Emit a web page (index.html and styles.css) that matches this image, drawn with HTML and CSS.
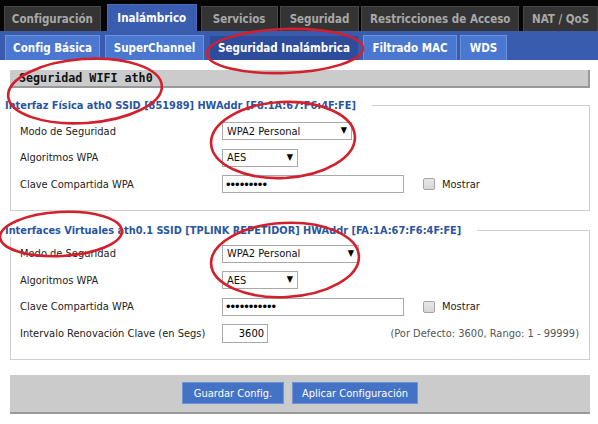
FILE: index.html
```html
<!DOCTYPE html>
<html lang="es">
<head>
    <meta charset="UTF-8">
    <title>Seguridad Inalámbrica</title>
    <link rel="stylesheet" href="styles.css">
</head>
<body>
    <div class="topbar">
        <a class="tab">Configuración</a>
        <a class="tab active">Inalámbrico</a>
        <a class="tab">Servicios</a>
        <a class="tab">Seguridad</a>
        <a class="tab">Restricciones de Acceso</a>
        <a class="tab">NAT / QoS</a>
    </div>
    <div class="subbar">
        <a class="subtab">Config Básica</a>
        <a class="subtab">SuperChannel</a>
        <a class="subtab active">Seguridad Inalámbrica</a>
        <a class="subtab">Filtrado MAC</a>
        <a class="subtab">WDS</a>
    </div>

    <div class="content">
        <h2 class="section">Seguridad WIFI ath0</h2>

        <fieldset class="group first">
            <legend>Interfaz Física ath0 SSID [851989] HWAddr [F8:1A:67:F6:4F:FE]</legend>
            <div class="row">
                <label>Modo de Seguridad</label>
                <span class="sel mode"><select><option>WPA2 Personal</option></select></span>
            </div>
            <div class="row">
                <label>Algoritmos WPA</label>
                <span class="sel algo"><select><option>AES</option></select></span>
            </div>
            <div class="row">
                <label>Clave Compartida WPA</label>
                <input class="key" type="password" value="123456789">
                <span class="check"></span><span class="show">Mostrar</span>
            </div>
        </fieldset>

        <fieldset class="group second">
            <legend>Interfaces Virtuales ath0.1 SSID [TPLINK REPETIDOR] HWAddr [FA:1A:67:F6:4F:FE]</legend>
            <div class="row">
                <label>Modo de Seguridad</label>
                <span class="sel mode wide"><select><option>WPA2 Personal</option></select></span>
            </div>
            <div class="row">
                <label>Algoritmos WPA</label>
                <span class="sel algo"><select><option>AES</option></select></span>
            </div>
            <div class="row">
                <label>Clave Compartida WPA</label>
                <input class="key" type="password" value="12345678901">
                <span class="check"></span><span class="show">Mostrar</span>
            </div>
            <div class="row">
                <label>Intervalo Renovación Clave (en Segs)</label>
                <input class="num" type="text" value="3600">
                <span class="hint">(Por Defecto: 3600, Rango: 1 - 99999)</span>
            </div>
        </fieldset>

        <div class="actions">
            <button class="save">Guardar Config.</button>
            <button class="apply">Aplicar Configuración</button>
        </div>
    </div>

    <svg class="marks" width="598" height="424" viewBox="0 0 598 424">
        <ellipse cx="285" cy="51" rx="78" ry="22" transform="rotate(-2 285 51)"/>
        <ellipse cx="85" cy="91" rx="77" ry="32" transform="rotate(-4 85 91)"/>
        <ellipse cx="283" cy="140" rx="72" ry="38" transform="rotate(-3 283 140)"/>
        <ellipse cx="61" cy="234" rx="61" ry="22" transform="rotate(-3 61 234)"/>
        <ellipse cx="285" cy="260" rx="74" ry="37" transform="rotate(-3 285 260)"/>
    </svg>
</body>
</html>
```

FILE: styles.css
```css
*{
    box-sizing: border-box;
}
body{
    margin: 0;
    background: #fff;
    font-family: "DejaVu Sans Condensed", "Liberation Sans", Arial, sans-serif;
    font-size: 11px;
    color: #222;
    position: relative;
}
.topbar{
    background: #050505;
    height: 31px;
    display: flex; align-items: flex-end;
    padding-left: 4px;
}
.tab{
    height: 25px;
    display: flex; align-items: center; justify-content: center;
    white-space: nowrap;
    background: #343434;
    border: 1px solid #474747; border-bottom: 0;
    color: #a8a8a8;
    font-weight: bold; font-size: 11.5px;
}
.tab:nth-child(1){ width: 97px; }
.tab:nth-child(2){ width: 90px; margin-left: 6px; }
.tab:nth-child(3){ width: 77px; margin-left: 4px; }
.tab:nth-child(4){ width: 80px; margin-left: 2px; }
.tab:nth-child(5){ width: 158px; margin-left: 2px; }
.tab:nth-child(6){ width: 75px; margin-left: 4px; }
.tab.active{
    height: 27px;
    background: #3b5db0;
    border-color: #4a6cc0;
    color: #fff;
}
.subbar{
    background: #3a5cae;
    height: 29px;
    display: flex; align-items: flex-end;
    padding-left: 5px;
}
.subtab{
    height: 25px;
    display: flex; align-items: center; justify-content: center;
    white-space: nowrap;
    background: #4a77cf;
    border: 1px solid #6b92dc; border-bottom: 0;
    color: #fff;
    font-weight: bold; font-size: 11.5px;
}
.subtab:nth-child(1){ width: 95px; }
.subtab:nth-child(2){ width: 99px; margin-left: 5px; }
.subtab:nth-child(3){ width: 150px; margin-left: 5px; }
.subtab:nth-child(4){ width: 94px; margin-left: 4px; }
.subtab:nth-child(5){ width: 47px; margin-left: 3px; }
.subtab.active{
    background: #2d4d9c;
    border-color: #3a5cae;
}
.content{
    padding: 10px 8px 0 10px;
}
.section{
    margin: 0;
    height: 18px;
    background: #cbcbcb;
    border-right: 2px solid #999; border-bottom: 2px solid #999;
    font-family: "DejaVu Sans Mono", monospace;
    font-size: 11.7px; font-weight: bold;
    line-height: 17px;
    padding-left: 9px;
    color: #111;
}
.group{
    margin: 11px 0 0 0;
    border: 1px solid #cfcfcf;
    padding: 6px 0 12px 9px;
    min-width: 0;
}
.group.second{
    margin-top: 13px;
    padding-top: 4px;
    padding-bottom: 12px;
}
.group legend{
    margin-left: -15px;
    padding: 0 16px 0 0;
    font-size: 10.9px; font-weight: bold;
    color: #2a55a0;
}
.row{
    display: flex; align-items: center;
    height: 26.5px;
}
.row label{
    width: 202px;
    font-size: 11px;
    color: #222;
}
.sel{
    position: relative;
    display: inline-block;
    height: 18px;
}
.sel select{
    appearance: none;
    width: 100%; height: 18px;
    border: 1px solid #a9a9a9;
    background: #fff;
    font-family: "DejaVu Sans Condensed", "Liberation Sans", Arial, sans-serif;
    font-size: 11px;
    padding: 0 0 0 4px;
    color: #111;
}
.sel::after{
    content: "\25BC";
    position: absolute; right: 5px; top: 3px;
    font-size: 9px;
    color: #000;
}
.sel.mode{ width: 130px; }
.sel.mode.wide{ width: 137px; }
.sel.algo{ width: 76px; }
.key{
    width: 182px; height: 18px;
    border: 1px solid #a9a9a9;
    padding: 0 3px;
    font-size: 13px;
}
.check{
    width: 12px; height: 12px;
    margin-left: 19px;
    border: 1px solid #a4a4a4;
    border-radius: 2px;
    background: linear-gradient(#e8e8e8, #d6d6d6);
}
.show{
    margin-left: 7px;
}
.num{
    width: 46px; height: 19px;
    border: 1px solid #a9a9a9;
    text-align: right;
    padding: 0 3px;
    font-family: "DejaVu Sans Condensed", "Liberation Sans", Arial, sans-serif;
    font-size: 11px;
}
.hint{
    margin-left: auto;
    margin-right: 10px;
    color: #555;
}
.actions{
    margin-top: 15px;
    height: 39px;
    background: #cbcbcb;
    border-bottom: 2px solid #999;
    display: flex; justify-content: center; align-items: center;
    gap: 8px;
}
.actions button{
    height: 22px;
    background: #4472c4;
    border: 1px solid #6f93d8;
    color: #fff;
    font-family: "DejaVu Sans Condensed", "Liberation Sans", Arial, sans-serif;
    font-size: 11px;
    padding: 0;
}
.actions .save{ width: 102px; }
.actions .apply{ width: 126px; }
.marks{
    position: absolute; left: 0; top: 0;
    pointer-events: none;
}
.marks ellipse{
    fill: none;
    stroke: #d2202c;
    stroke-width: 2.6;
}
```
